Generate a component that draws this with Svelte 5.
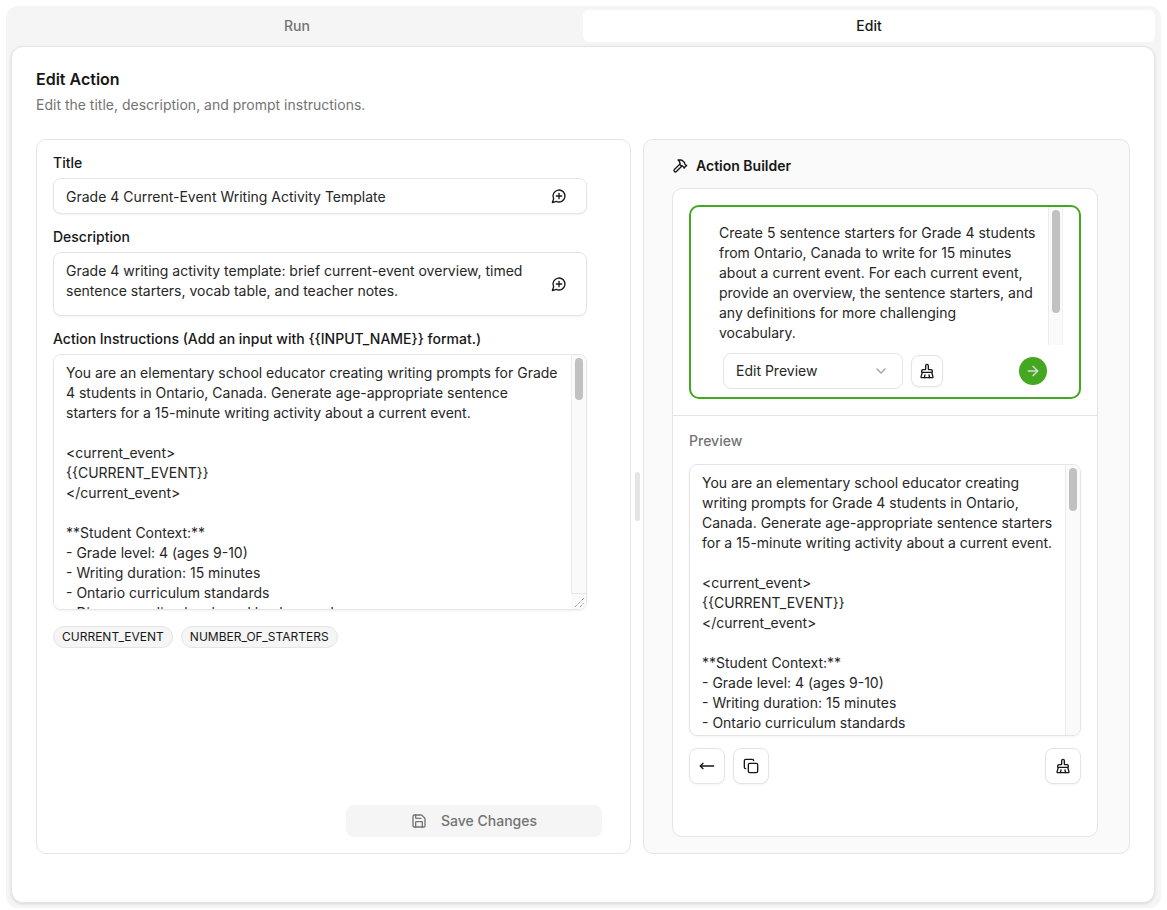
<script>
	const tabs = ['Run', 'Edit'];
	let activeTab = $state('Edit');

	let title = $state('Grade 4 Current-Event Writing Activity Template');
	let description = $state(
		'Grade 4 writing activity template: brief current-event overview, timed sentence starters, vocab table, and teacher notes.'
	);
	let mode = $state('Edit Preview');
	let request = $state(
		'Create 5 sentence starters for Grade 4 students from Ontario, Canada to write for 15 minutes about a current event. For each current event, provide an overview, the sentence starters, and any definitions for more challenging vocabulary.'
	);

	const prompt = `You are an elementary school educator creating writing prompts for Grade 4 students in Ontario, Canada. Generate age-appropriate sentence starters for a 15-minute writing activity about a current event.

<current_event>
{{CURRENT_EVENT}}
</current_event>

**Student Context:**
- Grade level: 4 (ages 9-10)
- Writing duration: 15 minutes
- Ontario curriculum standards
- Diverse reading levels and backgrounds

**Task:**
Create {{NUMBER_OF_STARTERS}} sentence starters for this event.`;

	let instructions = $state(prompt);
	const inputs = ['CURRENT_EVENT', 'NUMBER_OF_STARTERS'];
</script>

{#snippet messagePlus()}
	<svg class="icon" viewBox="0 0 24 24"><path d="M7.9 20A9 9 0 1 0 4 16.1L2 22Z" /><path d="M8 12h8" /><path d="M12 8v8" /></svg>
{/snippet}

{#snippet broom()}
	<svg class="icon" viewBox="0 0 24 24">
		<path d="m16 22-1-4" />
		<path d="M19 13.99a1 1 0 0 0 1-1V12a2 2 0 0 0-2-2h-3a1 1 0 0 1-1-1V4a2 2 0 0 0-4 0v5a1 1 0 0 1-1 1H6a2 2 0 0 0-2 2v.99a1 1 0 0 0 1 1" />
		<path d="M5 14h14l1.973 6.767A1 1 0 0 1 20 22H4a1 1 0 0 1-.973-1.233z" />
		<path d="m8 22 1-4" />
	</svg>
{/snippet}

<div class="page">
	<div class="shell">
		<div class="tabs">
			{#each tabs as tab}
				<button class="tab" class:active={activeTab == tab} onclick={() => (activeTab = tab)}>{tab}</button>
			{/each}
		</div>

		<main class="card">
			<h1>Edit Action</h1>
			<p class="sub">Edit the title, description, and prompt instructions.</p>

			<div class="panels">
				<section class="form">
					<label for="title">Title</label>
					<div class="field">
						<input id="title" type="text" bind:value={title} />
						<button class="inline-btn" aria-label="Improve title">{@render messagePlus()}</button>
					</div>

					<label for="description">Description</label>
					<div class="field">
						<textarea id="description" class="desc" bind:value={description}></textarea>
						<button class="inline-btn" aria-label="Improve description">{@render messagePlus()}</button>
					</div>

					<label for="instructions">Action Instructions (Add an input with {'{{INPUT_NAME}}'} format.)</label>
					<div class="instructions-wrap">
						<textarea id="instructions" class="instructions" bind:value={instructions}></textarea>
						<div class="scrollbar left-bar"><div class="thumb left-thumb"></div></div>
						<svg class="grip" viewBox="0 0 15 15">
							<path d="M4 13 13 4" />
							<path d="M9 13 13 9" />
						</svg>
					</div>

					<div class="chips">
						{#each inputs as input}
							<span class="chip">{input}</span>
						{/each}
					</div>

					<button class="save" disabled>
						<svg class="icon" viewBox="0 0 24 24">
							<path d="M15.2 3a2 2 0 0 1 1.4.6l3.8 3.8a2 2 0 0 1 .6 1.4V19a2 2 0 0 1-2 2H5a2 2 0 0 1-2-2V5a2 2 0 0 1 2-2z" />
							<path d="M17 21v-7a1 1 0 0 0-1-1H8a1 1 0 0 0-1 1v7" />
							<path d="M7 3v4a1 1 0 0 0 1 1h7" />
						</svg>
						Save Changes
					</button>
				</section>

				<div class="handle-col"><div class="handle"></div></div>

				<section class="builder">
					<h2>
						<svg class="icon" viewBox="0 0 24 24">
							<path d="m15 12-8.373 8.373a1 1 0 1 1-3-3L12 9" />
							<path d="m18 15 4-4" />
							<path d="m21.5 11.5-1.914-1.914A2 2 0 0 1 19 8.172V7l-2.26-2.26a6 6 0 0 0-4.202-1.756L9 2.96l.92.82A6.18 6.18 0 0 1 12 8.4V10l2 2h1.172a2 2 0 0 1 1.414.586L18.5 14.5" />
						</svg>
						Action Builder
					</h2>

					<div class="builder-card">
						<div class="composer-wrap">
							<div class="composer">
								<div class="request-wrap">
									<textarea class="request" bind:value={request}></textarea>
									<div class="scrollbar request-bar"><div class="thumb request-thumb"></div></div>
								</div>
								<div class="composer-row">
									<div class="select-wrap">
										<select bind:value={mode}>
											<option>Edit Preview</option>
											<option>New Action</option>
										</select>
										<svg class="icon chevron" viewBox="0 0 24 24"><path d="m6 9 6 6 6-6" /></svg>
									</div>
									<button class="icon-btn small" aria-label="Clear request">{@render broom()}</button>
									<button class="send" aria-label="Send">
										<svg class="icon" viewBox="0 0 24 24"><path d="M5 12h14" /><path d="m12 5 7 7-7 7" /></svg>
									</button>
								</div>
							</div>
						</div>

						<div class="preview-wrap">
							<div class="preview-label">Preview</div>
							<div class="preview-box">
								<div class="preview">{prompt}</div>
								<div class="scrollbar preview-bar"><div class="thumb preview-thumb"></div></div>
							</div>
							<div class="preview-actions">
								<button class="icon-btn" aria-label="Back">
									<svg class="icon" viewBox="0 0 24 24"><path d="M6 8l-4 4 4 4" /><path d="M2 12h20" /></svg>
								</button>
								<button class="icon-btn" aria-label="Copy">
									<svg class="icon" viewBox="0 0 24 24">
										<rect x="8" y="8" width="14" height="14" rx="2" />
										<path d="M4 16c-1.1 0-2-.9-2-2V4c0-1.1.9-2 2-2h10c1.1 0 2 .9 2 2" />
									</svg>
								</button>
								<button class="icon-btn push" aria-label="Clear preview">{@render broom()}</button>
							</div>
						</div>
					</div>
				</section>
			</div>
		</main>
	</div>
</div>

<style>
	:global(body) {
		background: #fff;
		font-family: Inter, 'Liberation Sans', sans-serif;
		color: #171717;
	}
	.page {
		padding: 6px;
	}
	.shell {
		height: 902px;
		box-sizing: border-box;
		padding: 4px 6px 4px 5px;
		background: #f5f5f5;
		border-radius: 12px;
	}
	.tabs {
		display: grid;
		grid-template-columns: 1fr 1fr;
	}
	.tab {
		height: 32px;
		border: 0;
		border-radius: 6px;
		background: transparent;
		color: #737373;
		font: 500 14px/20px Inter, sans-serif;
	}
	.tab.active {
		background: #fff;
		color: #171717;
	}
	.card {
		height: 857px;
		box-sizing: border-box;
		margin-top: 4px;
		padding: 20px 24px;
		background: #fff;
		border: 1px solid #e5e5e5;
		border-radius: 12px;
		box-shadow: 0 1px 3px rgba(0, 0, 0, 0.12);
	}
	h1 {
		margin: 0;
		font-size: 16px;
		line-height: 24px;
		font-weight: 600;
	}
	.sub {
		margin: 4px 0 24px;
		font-size: 14px;
		line-height: 20px;
		color: #737373;
	}
	.panels {
		display: flex;
		height: 715px;
	}
	.form {
		display: flex;
		flex-direction: column;
		align-items: flex-start;
		width: 595px;
		box-sizing: border-box;
		padding: 13px 16px 16px;
		border: 1px solid #e5e5e5;
		border-radius: 10px;
	}
	label {
		margin-bottom: 5px;
		font-size: 14px;
		line-height: 20px;
		font-weight: 500;
	}
	.field {
		position: relative;
		width: 534px;
		margin-bottom: 13px;
	}
	input,
	textarea {
		display: block;
		box-sizing: border-box;
		width: 100%;
		margin: 0;
		padding: 8px 12px;
		border: 1px solid #e5e5e5;
		border-radius: 8px;
		background: #fff;
		color: #262626;
		font: 400 14px/20px Inter, sans-serif;
		outline: none;
		box-shadow: 0 1px 2px rgba(0, 0, 0, 0.05);
		resize: none;
	}
	input {
		height: 36px;
		padding-right: 48px;
	}
	.desc {
		height: 64px;
		padding-right: 48px;
	}
	.inline-btn {
		position: absolute;
		top: 50%;
		right: 20px;
		display: flex;
		padding: 0;
		border: 0;
		background: none;
		color: #171717;
		transform: translateY(-50%);
	}
	.icon {
		display: block;
		width: 16px;
		height: 16px;
		flex: none;
		fill: none;
		stroke: currentColor;
		stroke-width: 2;
		stroke-linecap: round;
		stroke-linejoin: round;
	}
	.instructions-wrap {
		position: relative;
		width: 534px;
		height: 256px;
	}
	.instructions {
		height: 100%;
		padding-right: 27px;
		overflow-y: auto;
	}
	.scrollbar {
		position: absolute;
		box-sizing: border-box;
		width: 15px;
		padding: 3px 3px 0;
		background: #fafafa;
		border-left: 1px solid #ececec;
		border-right: 1px solid #f2f2f2;
	}
	.thumb {
		width: 8px;
		background: #c1c1c1;
		border-radius: 4px;
	}
	.left-bar {
		top: 1px;
		right: 1px;
		bottom: 16px;
		border-bottom: 1px solid #e5e5e5;
		border-right: 0;
		border-top-right-radius: 7px;
	}
	.left-thumb {
		height: 42px;
	}
	.grip {
		position: absolute;
		right: 1px;
		bottom: 1px;
		width: 15px;
		height: 15px;
		background: #fafafa;
		border-bottom-right-radius: 7px;
		fill: none;
		stroke: #6b6b6b;
		stroke-width: 1;
		stroke-dasharray: 1 1;
	}
	.chips {
		display: flex;
		gap: 8px;
		margin-top: 16px;
	}
	.chip {
		padding: 0 8px;
		background: #f5f5f5;
		border: 1px solid #e5e5e5;
		border-radius: 999px;
		font-size: 12px;
		line-height: 20px;
		font-weight: 400;
	}
	.save {
		display: flex;
		align-items: center;
		justify-content: center;
		gap: 14px;
		width: 256px;
		height: 32px;
		margin: auto 12px 0 auto;
		border: 0;
		border-radius: 8px;
		background: #f5f5f5;
		color: #737373;
		font: 500 14px/20px Inter, sans-serif;
	}
	.handle-col {
		display: flex;
		align-items: center;
		justify-content: center;
		width: 12px;
	}
	.handle {
		width: 5px;
		height: 49px;
		background: #e5e5e5;
		border-radius: 3px;
	}
	.builder {
		width: 487px;
		box-sizing: border-box;
		padding: 16px 31px 16px 28px;
		background: #fafafa;
		border: 1px solid #e5e5e5;
		border-radius: 10px;
	}
	h2 {
		display: flex;
		align-items: center;
		gap: 8px;
		margin: 0 0 12px;
		font-size: 14px;
		line-height: 20px;
		font-weight: 600;
	}
	.builder-card {
		height: 649px;
		box-sizing: border-box;
		background: #fff;
		border: 1px solid #e5e5e5;
		border-radius: 10px;
	}
	.composer-wrap {
		padding: 16px;
		border-bottom: 1px solid #e5e5e5;
	}
	.composer {
		height: 194px;
		box-sizing: border-box;
		border: 2px solid #43a820;
		border-radius: 10px;
	}
	.request-wrap {
		position: relative;
		width: 360px;
		height: 138px;
		margin-left: 12px;
	}
	.request {
		height: 100%;
		padding: 16px 27.5px 0 16px;
		border: 0;
		border-radius: 0;
		box-shadow: none;
		overflow-y: auto;
	}
	.request-bar {
		top: 0;
		right: 0;
		bottom: 0;
	}
	.request-thumb {
		height: 103px;
	}
	.composer-row {
		display: flex;
		align-items: center;
		gap: 8px;
		height: 36px;
		margin-top: 8px;
		padding: 0 32px;
	}
	.select-wrap {
		position: relative;
		width: 180px;
	}
	select {
		display: block;
		width: 100%;
		height: 36px;
		padding: 0 12px;
		border: 1px solid #e5e5e5;
		border-radius: 8px;
		background: #fff;
		color: #262626;
		font: 400 14px/20px Inter, sans-serif;
		appearance: none;
		outline: none;
	}
	.chevron {
		position: absolute;
		top: 10px;
		right: 14px;
		color: #a3a3a3;
		pointer-events: none;
	}
	.icon-btn {
		display: flex;
		align-items: center;
		justify-content: center;
		width: 36px;
		height: 36px;
		padding: 0;
		border: 1px solid #e5e5e5;
		border-radius: 8px;
		background: #fff;
		color: #171717;
		box-shadow: 0 1px 2px rgba(0, 0, 0, 0.05);
	}
	.icon-btn.small {
		width: 32px;
		height: 32px;
	}
	.send {
		display: flex;
		align-items: center;
		justify-content: center;
		width: 28px;
		height: 28px;
		margin-left: auto;
		padding: 0;
		border: 0;
		border-radius: 50%;
		background: #43a820;
		color: #ddd;
	}
	.preview-wrap {
		padding: 15px 16px 16px;
	}
	.preview-label {
		margin-bottom: 13px;
		font-size: 14px;
		line-height: 20px;
		font-weight: 500;
		color: #737373;
	}
	.preview-box {
		position: relative;
		height: 272px;
	}
	.preview {
		height: 100%;
		box-sizing: border-box;
		padding: 8px 27px 8px 12px;
		border: 1px solid #e5e5e5;
		border-radius: 8px;
		color: #262626;
		font-size: 14px;
		line-height: 20px;
		white-space: pre-wrap;
		overflow-y: auto;
		box-shadow: 0 1px 2px rgba(0, 0, 0, 0.05);
	}
	.preview-bar {
		top: 1px;
		right: 1px;
		bottom: 1px;
		border-right: 0;
		border-radius: 0 7px 7px 0;
	}
	.preview-thumb {
		height: 43px;
	}
	.preview-actions {
		display: flex;
		gap: 8px;
		margin-top: 12px;
	}
	.push {
		margin-left: auto;
	}
</style>
